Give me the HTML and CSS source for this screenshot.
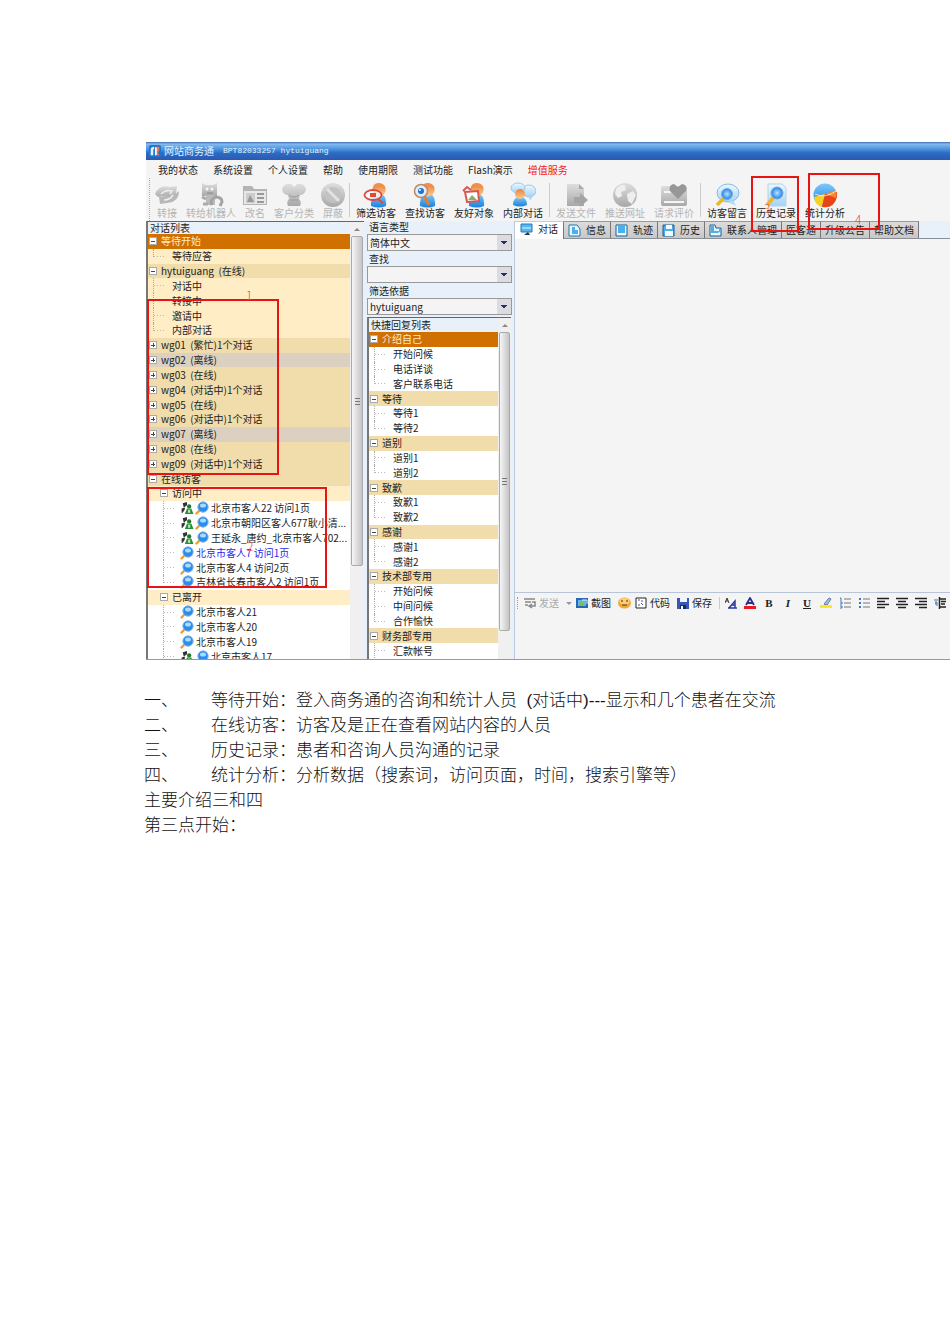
FILE: index.html
```
<!DOCTYPE html>
<html lang="zh-CN">
<head>
    <meta charset="UTF-8">
    <meta name="viewport" content="width=device-width, initial-scale=1.0">
    <title>网站商务通</title>
    <link rel="stylesheet" href="styles.css">
</head>
<body>
    <!-- shared icons -->
    <svg class="sprite" aria-hidden="true">
        <defs>
            <linearGradient id="g-gray" x1="0" y1="0" x2="0" y2="1"><stop offset="0" stop-color="#dedede"/><stop offset="1" stop-color="#a8a8a8"/></linearGradient>
            <linearGradient id="g-blue" x1="0" y1="0" x2="0" y2="1"><stop offset="0" stop-color="#7cc8fa"/><stop offset="1" stop-color="#1c80de"/></linearGradient>
            <linearGradient id="g-skin" x1="0" y1="0" x2="0" y2="1"><stop offset="0" stop-color="#e8863a"/><stop offset="1" stop-color="#fbc890"/></linearGradient>
            <linearGradient id="g-pale" x1="0" y1="0" x2="0" y2="1"><stop offset="0" stop-color="#eef8ff"/><stop offset="1" stop-color="#a4d2f4"/></linearGradient>
            <radialGradient id="g-lens"><stop offset="0" stop-color="#b4e4ff"/><stop offset="1" stop-color="#2080e4"/></radialGradient>
        </defs>
        <symbol id="visitor" viewBox="0 0 14 14">
            <path d="M1.500 12.500L5 9" stroke="#e8a030" stroke-width="2.400" stroke-linecap="round"/>
            <circle cx="8" cy="6" r="5.200" fill="#2c8cec" stroke="#88b8e4"/>
            <ellipse cx="8" cy="4.500" rx="3" ry="2" fill="#a8dcff"/>
        </symbol>
        <symbol id="talking" viewBox="0 0 12 13">
            <path d="M2 2l4-1v3L3 6zM1 7l3-1v2l-2 3H1z" fill="#333"/>
            <circle cx="8" cy="5" r="2" fill="#1c7a2c"/>
            <path d="M4 12l2-5h4l2 5z" fill="#249038"/>
            <path d="M7 8h2v3H7z" fill="#bfe8b8"/>
        </symbol>
        <symbol id="person" viewBox="0 0 26 26">
            <path d="M8 24q-1-12 8-12 8 0 7 12-7 3-15 0z" fill="url(#g-blue)"/>
            <circle cx="16" cy="8" r="6.500" fill="url(#g-skin)"/>
            <path d="M9.500 7q1-7 7-6 6 1 6 6-6-4-13 0z" fill="#f09048"/>
        </symbol>
        <symbol id="lines" viewBox="0 0 12 12">
            <path d="M0 1.500h12M0 4.500h8M0 7.500h12M0 10.500h8" stroke="#222" stroke-width="1.500"/>
        </symbol>
    </svg>

    <main class="page">
        <section class="app">
            <header class="titlebar">
                <svg class="logo" viewBox="0 0 14 14"><rect width="14" height="14" rx="2" fill="#2474c8"/><path d="M2 12V5q0-3 4-3v3H5v7z" fill="#d8f0ff"/><path d="M7 12V2h5v5l-2 1 2 4H9V9z" fill="#f47850"/><path d="M7 3h2v9H7z" fill="#fff"/></svg>
                <span>网站商务通</span>
                <span class="account">BPT82033257 hytuiguang</span>
            </header>

            <nav class="menu">
                <a href="#">我的状态</a>
                <a href="#">系统设置</a>
                <a href="#">个人设置</a>
                <a href="#">帮助</a>
                <a href="#">使用期限</a>
                <a href="#">测试功能</a>
                <a href="#">Flash演示</a>
                <a href="#" class="hot">增值服务</a>
            </nav>

            <div class="toolbar">
                <button type="button" disabled><svg viewBox="0 0 26 26"><path d="M1 12Q5 2 16 5l7-1-1 8-4 4-9-2-5 1z" fill="url(#g-gray)"/><path d="M25 9q0 11-12 12l-7 1-1-7 6-1q8 1 14-5z" fill="#b8b8b8"/><path d="M7 12q5-5 11-3l-2 3M10 18q6 0 9-5" stroke="#eee" stroke-width="1.500" fill="none"/></svg>转接</button>
                <button type="button" disabled><svg viewBox="0 0 26 26"><path d="M4 1l4 2h7l4-2v13H4z" fill="url(#g-gray)"/><path d="M8 13h9v10H8z" fill="#bbb"/><circle cx="9" cy="7" r="1.500" fill="#f5f5f5"/><circle cx="14" cy="7" r="1.500" fill="#f5f5f5"/><path d="M9 11h6" stroke="#888"/><path d="M14 23q-3-5 4-8 6 0 6 5l-2 4" fill="none" stroke="#a4a4a4" stroke-width="3"/><path d="M4 15l4 2M5 22h5" stroke="#aaa" stroke-width="3"/></svg>转给机器人</button>
                <button type="button" disabled><svg viewBox="0 0 26 26"><path d="M1 4h9l2 3h13v16H1z" fill="#b4b4b4"/><path d="M2 9h22v13H2z" fill="#e8e8e8"/><path d="M4 11h9v10H4z" fill="#ccc"/><path d="M5 20l3-7 4 7z" fill="#999"/><path d="M15 12h7M15 16h7M15 20h7" stroke="#999" stroke-width="2"/></svg>改名</button>
                <button type="button" disabled><svg viewBox="0 0 26 26"><path d="M1 7q2-6 9-5l3 3 3-3q7-1 9 5-1 6-6 6l-1 4q3 3 1 7H7q-2-4 1-7l-1-4Q2 13 1 7z" fill="url(#g-gray)"/><path d="M8 13q5 4 10 0M9 18h8" stroke="#999" fill="none"/></svg>客户分类</button>
                <button type="button" disabled><svg viewBox="0 0 26 26"><circle cx="13" cy="13" r="12" fill="url(#g-gray)"/><circle cx="13" cy="13" r="8" fill="#c2c2c2"/><path d="M7 7l12 12" stroke="#e2e2e2" stroke-width="3"/></svg>屏蔽</button>
                <span class="sep"></span>
                <button type="button"><svg viewBox="0 0 26 26"><use href="#person"/><ellipse cx="10" cy="13" rx="8.500" ry="5" fill="#fff" fill-opacity=".7" stroke="#e0483c" stroke-width="1.800"/><path d="M7 11h6v4H7z" fill="#e0483c"/><path d="M15 17l5 4" stroke="#e0483c" stroke-width="2"/></svg>筛选访客</button>
                <button type="button"><svg viewBox="0 0 26 26"><use href="#person"/><path d="M12 14l5 9" stroke="#e08030" stroke-width="3"/><circle cx="9" cy="9" r="6.500" fill="#d8f0ff" stroke="#c88460" stroke-width="1.500"/><circle cx="9" cy="9" r="3" fill="#2470d0"/><circle cx="8" cy="8" r="1" fill="#fff"/></svg>查找访客</button>
                <button type="button"><svg viewBox="0 0 26 26"><use href="#person"/><path d="M4 10l13-1 1 10-12 1z" fill="#fff" stroke="#d85850" stroke-width="2"/><path d="M7 18l4-5 5 5z" fill="#78b868"/><path d="M2 9l4-4 4 3" fill="none" stroke="#d85850" stroke-width="2"/></svg>友好对象</button>
                <button type="button"><svg viewBox="0 0 26 26"><ellipse cx="19" cy="9" rx="7" ry="6" fill="url(#g-pale)" stroke="#98c8ec"/><path d="M19 14l1 5 3-6z" fill="#a4d2f4"/><ellipse cx="8" cy="6" rx="7" ry="5" fill="url(#g-pale)" stroke="#98c8ec"/><path d="M3 23q0-8 7-8t7 8q-7 3-14 0z" fill="url(#g-blue)"/><circle cx="10" cy="12" r="5" fill="url(#g-skin)"/></svg>内部对话</button>
                <span class="sep"></span>
                <button type="button" disabled><svg viewBox="0 0 26 26"><path d="M4 2h12l5 5v17H4z" fill="url(#g-gray)"/><path d="M16 2v5h5z" fill="#aaa"/><path d="M11 15h6v-4l8 7-8 7v-4h-6z" fill="#a4a4a4"/></svg>发送文件</button>
                <button type="button" disabled><svg viewBox="0 0 26 26"><circle cx="13" cy="13" r="12" fill="url(#g-gray)"/><path d="M4 7q5-5 9-4l1 5-5 2 1 4-4 2-3-4zM15 12l6-3 3 4-4 9-4-3z" fill="#eee"/></svg>推送网址</button>
                <button type="button" disabled><svg viewBox="0 0 26 26"><rect x="0" y="4" width="26" height="20" rx="2" fill="url(#g-gray)"/><path d="M3 10h7M3 20h20" stroke="#f4f4f4" stroke-width="2"/><path d="M17 17l-8-8q-2-6 4-7l4 3 4-3q6 1 4 7z" fill="#979797"/></svg>请求评价</button>
                <span class="sep"></span>
                <button type="button"><svg viewBox="0 0 26 26"><ellipse cx="14" cy="11" rx="11" ry="9" fill="url(#g-pale)" stroke="#88bce8"/><path d="M19 18l3 6-8-4z" fill="#b4daf6"/><path d="M3 23l7-7" stroke="#f0b820" stroke-width="3.500"/><circle cx="13" cy="12" r="5.500" fill="url(#g-lens)" stroke="#78b0e4"/></svg>访客留言</button>
                <button type="button"><svg viewBox="0 0 26 26"><path d="M5 2h14l4 4v18H5z" fill="url(#g-pale)" stroke="#b0d4f0"/><path d="M4 23l7-8" stroke="#f0b820" stroke-width="3.500"/><circle cx="14" cy="11" r="6" fill="url(#g-lens)" stroke="#78a8d8"/></svg>历史记录</button>
                <button type="button"><svg viewBox="0 0 26 26"><circle cx="13" cy="13" r="11.500" fill="url(#g-blue)"/><path d="M13 12L2 15q1 8 8 10z" fill="#f8d020"/><path d="M13 12l-3 13q12 2 15-10v-5z" fill="#e84418"/><path d="M13 12l11-4q1 4 0 8z" fill="#f88828"/><path d="M3 12q10 5 21-3" stroke="#fff" fill="none" opacity=".7"/></svg>统计分析</button>
            </div>

            <div class="workspace">
                <!-- dialog list -->
                <aside class="dialogs pane">
                    <div class="list">
                        <h2>对话列表</h2>
                        <ul class="tree tree-dialogs">
                            <li class="selected"><button type="button" class="toggle minus" aria-label="收起"></button>等待开始</li>
                            <li class="leaf last soft">等待应答</li>
                            <li class="group"><button type="button" class="toggle minus" aria-label="收起"></button>hytuiguang&nbsp; (在线)</li>
                            <li class="leaf soft">对话中</li>
                            <li class="leaf soft">转接中</li>
                            <li class="leaf soft">邀请中</li>
                            <li class="leaf last soft">内部对话</li>
                            <li class="group"><button type="button" class="toggle plus" aria-label="展开"></button>wg01&nbsp; (繁忙)1个对话</li>
                            <li class="offline"><button type="button" class="toggle plus" aria-label="展开"></button>wg02&nbsp; (离线)</li>
                            <li class="group"><button type="button" class="toggle plus" aria-label="展开"></button>wg03&nbsp; (在线)</li>
                            <li class="group"><button type="button" class="toggle plus" aria-label="展开"></button>wg04&nbsp; (对话中)1个对话</li>
                            <li class="group"><button type="button" class="toggle plus" aria-label="展开"></button>wg05&nbsp; (在线)</li>
                            <li class="group"><button type="button" class="toggle plus" aria-label="展开"></button>wg06&nbsp; (对话中)1个对话</li>
                            <li class="offline"><button type="button" class="toggle plus" aria-label="展开"></button>wg07&nbsp; (离线)</li>
                            <li class="group"><button type="button" class="toggle plus" aria-label="展开"></button>wg08&nbsp; (在线)</li>
                            <li class="group"><button type="button" class="toggle plus" aria-label="展开"></button>wg09&nbsp; (对话中)1个对话</li>
                            <li class="group"><button type="button" class="toggle minus" aria-label="收起"></button>在线访客</li>
                            <li class="sub soft"><button type="button" class="toggle minus" aria-label="收起"></button>访问中</li>
                            <li class="leaf deep"><svg><use href="#talking"/></svg><svg><use href="#visitor"/></svg>北京市客人22 访问1页</li>
                            <li class="leaf deep"><svg><use href="#talking"/></svg><svg><use href="#visitor"/></svg>北京市朝阳区客人677耿小清...</li>
                            <li class="leaf deep"><svg><use href="#talking"/></svg><svg><use href="#visitor"/></svg>王延永_唐约_北京市客人702...</li>
                            <li class="leaf deep current"><svg><use href="#visitor"/></svg>北京市客人7 访问1页</li>
                            <li class="leaf deep"><svg><use href="#visitor"/></svg>北京市客人4 访问2页</li>
                            <li class="leaf deep last"><svg><use href="#visitor"/></svg>吉林省长春市客人2 访问1页</li>
                            <li class="sub soft"><button type="button" class="toggle minus" aria-label="收起"></button>已离开</li>
                            <li class="leaf deep"><svg><use href="#visitor"/></svg>北京市客人21</li>
                            <li class="leaf deep"><svg><use href="#visitor"/></svg>北京市客人20</li>
                            <li class="leaf deep"><svg><use href="#visitor"/></svg>北京市客人19</li>
                            <li class="leaf deep"><svg><use href="#talking"/></svg><svg><use href="#visitor"/></svg>北京市客人17</li>
                        </ul>
                    </div>
                    <div class="scrollbar"><span class="up"></span><span class="thumb thumb-dialogs"></span></div>
                </aside>

                <!-- filters and quick replies -->
                <aside class="side">
                    <label for="lang">语言类型</label>
                    <div class="combo"><select id="lang"><option>简体中文</option></select></div>
                    <label for="find">查找</label>
                    <div class="combo"><select id="find"><option></option></select></div>
                    <label for="filter">筛选依据</label>
                    <div class="combo"><select id="filter"><option>hytuiguang</option></select></div>
                    <div class="replies pane">
                        <div class="list">
                            <h2>快捷回复列表</h2>
                            <ul class="tree tree-replies">
                                <li class="selected"><button type="button" class="toggle minus" aria-label="收起"></button>介绍自己</li>
                                <li class="leaf">开始问候</li>
                                <li class="leaf">电话详谈</li>
                                <li class="leaf last">客户联系电话</li>
                                <li class="group"><button type="button" class="toggle minus" aria-label="收起"></button>等待</li>
                                <li class="leaf">等待1</li>
                                <li class="leaf last">等待2</li>
                                <li class="group"><button type="button" class="toggle minus" aria-label="收起"></button>道别</li>
                                <li class="leaf">道别1</li>
                                <li class="leaf last">道别2</li>
                                <li class="group"><button type="button" class="toggle minus" aria-label="收起"></button>致歉</li>
                                <li class="leaf">致歉1</li>
                                <li class="leaf last">致歉2</li>
                                <li class="group"><button type="button" class="toggle minus" aria-label="收起"></button>感谢</li>
                                <li class="leaf">感谢1</li>
                                <li class="leaf last">感谢2</li>
                                <li class="group"><button type="button" class="toggle minus" aria-label="收起"></button>技术部专用</li>
                                <li class="leaf">开始问候</li>
                                <li class="leaf">中间问候</li>
                                <li class="leaf last">合作愉快</li>
                                <li class="group"><button type="button" class="toggle minus" aria-label="收起"></button>财务部专用</li>
                                <li class="leaf">汇款帐号</li>
                            </ul>
                        </div>
                        <div class="scrollbar"><span class="up"></span><span class="thumb thumb-replies"></span></div>
                    </div>
                </aside>

                <!-- conversation -->
                <section class="chat">
                    <div class="tabs">
                        <button type="button" class="active"><svg viewBox="0 0 13 13"><path d="M1 1h11v8H1z" fill="#52b8f0" stroke="#2878b8"/><path d="M2 5h9M5 11h5" stroke="#e4f6ff"/><path d="M4 12h6l-2-3z" fill="#333"/></svg>对话</button>
                        <button type="button"><svg viewBox="0 0 13 13"><path d="M1 1h8l3 4v7H1z" fill="#e8f6ff" stroke="#1878b8"/><path d="M4 3v7h6V6H7V3z" fill="#48b0ec"/></svg>信息</button>
                        <button type="button"><svg viewBox="0 0 13 13"><path d="M1 1h11v11H1z" fill="#e8f6ff" stroke="#1c5c90"/><path d="M3 1h7v8H3z" fill="#48b0ec"/></svg>轨迹</button>
                        <button type="button"><svg viewBox="0 0 13 13"><path d="M1 1h11v11H1z" fill="#48b0ec" stroke="#1c5c90"/><path d="M4 1h6v4H4zM3 7h8v5H3z" fill="#f0faff"/></svg>历史</button>
                        <button type="button"><svg viewBox="0 0 13 13"><path d="M1 1h5l1 3h5v8H1z" fill="#e8f6ff" stroke="#1c5c90"/><path d="M2 2h3v5h5V5h2v2L9 9H2z" fill="#48b0ec"/></svg>联系人管理</button>
                        <button type="button">医客通</button>
                        <button type="button">升级公告</button>
                        <button type="button">帮助文档</button>
                    </div>
                    <div class="messages"></div>
                    <div class="format">
                        <span class="handle"></span>
                        <button type="button" class="send" disabled><svg viewBox="0 0 12 12"><path d="M0 2h11M1 5h6M1 8h3M8 5h3v4H6M8 7L5 9l3 2" stroke="#888" stroke-width="1.500" fill="none"/></svg>发送</button>
                        <span class="caret"></span>
                        <button type="button" class="shot"><svg viewBox="0 0 12 12"><path d="M0 1h12v10H0z" fill="#2868b0"/><path d="M2 3h8v6H2z" fill="#60b8e8"/><path d="M2 9l3-5 5 5z" fill="#78c050"/><path d="M6 3h5v4" stroke="#d8f0ff" fill="none"/></svg>截图</button>
                        <button type="button" class="smile" aria-label="表情"><svg viewBox="0 0 13 12"><ellipse cx="6.500" cy="6" rx="6.500" ry="5.500" fill="#f0a838"/><ellipse cx="6.500" cy="4.500" rx="5" ry="3.500" fill="#fcd070"/><path d="M4 3v2M9 3v2M4 8h5" stroke="#503010"/></svg></button>
                        <button type="button" class="code"><svg viewBox="0 0 12 12"><path d="M1 1h10v10H1z" fill="#fff" stroke="#222"/><path d="M3 3h2M6 4h2M6 6l2 2M3 8h2" stroke="#4858a0"/></svg>代码</button>
                        <button type="button" class="save"><svg viewBox="0 0 12 12"><path d="M0 1h12v11H0z" fill="#3858b8"/><path d="M3 1h7v4H3z" fill="#f0f4ff"/><path d="M3 8h6v4H3z" fill="#202858"/><path d="M4 9h2v3H4z" fill="#fff"/></svg>保存</button>
                        <span class="divider"></span>
                        <div class="marks">
                            <button type="button" aria-label="字体"><svg viewBox="0 0 12 12"><path d="M0 6l2-5 2 5M1 4h2" stroke="#333" fill="none"/><path d="M4 11l6-7v7M6 8h4M3 11h9" stroke="#2838a0" stroke-width="1.500" fill="none"/></svg></button>
                            <button type="button" aria-label="颜色"><svg viewBox="0 0 12 12"><path d="M2 8l4-7 4 7M3 6h6" stroke="#2c308c" stroke-width="1.800" fill="none"/><path d="M0 9h12v3H0z" fill="#e81c24"/></svg></button>
                            <button type="button" class="glyph bold">B</button>
                            <button type="button" class="glyph italic">I</button>
                            <button type="button" class="glyph underline">U</button>
                            <button type="button" aria-label="突出显示"><svg viewBox="0 0 12 12"><path d="M4 7l5-6 2 1-4 6z" fill="#a8c0e0" stroke="#6078a0"/><path d="M0 8h12v3H0z" fill="#f8e828"/></svg></button>
                            <button type="button" aria-label="编号"><svg viewBox="0 0 12 12"><path d="M5 2h7M5 6h7M5 10h7" stroke="#777"/><path d="M1 1h1v3M1 5h2v2H1M1 9h2v2H1" stroke="#3878c0" fill="none"/></svg></button>
                            <button type="button" aria-label="项目符号"><svg viewBox="0 0 12 12"><path d="M5 2h7M5 6h7M5 10h7" stroke="#777"/><path d="M1 2h2M1 6h2M1 10h2" stroke="#3878c0" stroke-width="2"/></svg></button>
                            <button type="button" aria-label="左对齐"><svg><use href="#lines"/></svg></button>
                            <button type="button" aria-label="居中"><svg viewBox="0 0 12 12"><path d="M0 1.500h12M2 4.500h8M0 7.500h12M2 10.500h8" stroke="#222" stroke-width="1.500"/></svg></button>
                            <button type="button" aria-label="右对齐"><svg viewBox="0 0 12 12"><path d="M0 1.500h12M4 4.500h8M0 7.500h12M4 10.500h8" stroke="#222" stroke-width="1.500"/></svg></button>
                            <button type="button" aria-label="缩进"><svg viewBox="0 0 12 12"><path d="M6 2h6M7 4.500h5M7 7h4M6 10h6M5.500 0v12" stroke="#222" stroke-width="1.500"/><path d="M0 3h4M1 6l3 0M2 4v4h2" stroke="#3878c0" fill="none"/></svg></button>
                        </div>
                    </div>
                    <textarea class="compose" aria-label="输入消息"></textarea>
                </section>
            </div>

            <!-- numbered callouts over the window -->
            <span class="mark mark-1"><b>1</b></span>
            <span class="mark mark-2"><b>2</b></span>
            <span class="mark mark-3"><b>3</b></span>
            <span class="mark mark-4"><b>4</b></span>
        </section>

        <section class="notes">
            <dl>
                <dt>一、</dt><dd>等待开始：登入商务通的咨询和统计人员&nbsp; (对话中)---显示和几个患者在交流</dd>
                <dt>二、</dt><dd>在线访客：访客及是正在查看网站内容的人员</dd>
                <dt>三、</dt><dd>历史记录：患者和咨询人员沟通的记录</dd>
                <dt>四、</dt><dd>统计分析：分析数据（搜索词，访问页面，时间，搜索引擎等）</dd>
            </dl>
            <p>主要介绍三和四</p>
            <p>第三点开始：</p>
        </section>
    </main>
</body>
</html>
```
FILE: styles.css
```
* {
    margin: 0;
    padding: 0;
    box-sizing: border-box;
}

body {
    background: #fff;
    color: #222;
    font-family: "Noto Sans CJK SC", sans-serif;
    font-size: 10px;
    line-height: 14px;
}

button,
select,
textarea {
    font: inherit;
    color: inherit;
    background: none;
    border: none;
    border-radius: 0;
}

a {
    color: inherit;
    text-decoration: none;
}

.sprite {
    position: absolute;
    width: 0;
    height: 0;
}

.page {
    padding: 142px 0 0 144px;
}

/* window */
.app {
    position: relative;
    margin-left: 2px;
    background: #f4f4f4;
    overflow: hidden;
}

.titlebar {
    display: flex;
    align-items: center;
    height: 18px;
    padding: 0 3px;
    gap: 3px;
    background: linear-gradient(#3c68a8 0, #84bcf0 2px, #4c94e0 7px, #2c6cc4 11px, #2c58b0 18px);
    color: #e4f2ff;
}

.logo {
    width: 12px;
    height: 12px;
}

.account {
    margin-left: 6px;
    font-family: "Liberation Mono", monospace;
    font-size: 8px;
}

.menu {
    display: flex;
    gap: 15px;
    padding: 3px 12px 1px;
}

.menu .hot {
    color: #f02020;
}

.toolbar {
    display: flex;
    align-items: center;
    gap: 9px;
    height: 43px;
    margin-left: 3px;
    padding: 2px 0 2px 7px;
    border-left: 1px dotted #aaa;
    white-space: nowrap;
}

.toolbar button {
    display: flex;
    flex-direction: column;
    align-items: center;
    line-height: 10px;
}

.toolbar button:disabled {
    color: #b4b4b4;
}

.toolbar svg {
    width: 26px;
    height: 26px;
    margin: 0 -3px;
}

.sep {
    width: 1px;
    height: 34px;
    margin: 0 -3px;
    background: #ccc;
}

.workspace {
    display: grid;
    grid-template-columns: 218px 150px 1fr;
    height: 439px;
    background: #e8f1f9;
    border-bottom: 1px solid #999;
}

/* tree lists */
.pane {
    display: flex;
    min-height: 0;
    overflow: hidden;
    border-top: 1px solid #666;
    border-left: 2px solid #777;
    background: #fff;
}

.list {
    flex: 1;
    min-width: 0;
}

.list h2 {
    padding-left: 2px;
    background: #e8f1f9;
    font-size: 10px;
    font-weight: normal;
}

.dialogs h2 {
    line-height: 12px;
}

.tree {
    display: grid;
    grid-auto-rows: 1fr;
    list-style: none;
    white-space: nowrap;
}

.tree-dialogs {
    height: 430px;
}

.tree-replies {
    height: 326px;
}

.tree li {
    display: flex;
    align-items: center;
    min-height: 0;
    padding-left: 1px;
    line-height: 14px;
    overflow: hidden;
}

.tree .selected {
    background: #d07000;
    color: #ffeacb;
}

.tree .group {
    background: #f1dcab;
}

.tree .soft {
    background: #ffedc6;
}

.tree .offline {
    background: #dcd1c1;
}

.tree .current {
    color: #2828f0;
}

.tree .sub {
    padding-left: 12px;
}

.tree .leaf {
    padding-left: 5px;
}

.tree .deep {
    padding-left: 15px;
}

.leaf::before {
    content: "";
    flex: none;
    align-self: stretch;
    width: 11px;
    margin-right: 7px;
    border-left: 1px dotted #aaa;
    background: repeating-linear-gradient(90deg, #bbb 0 1px, transparent 1px 3px) center / 100% 1px no-repeat;
}

.leaf.last::before {
    align-self: flex-start;
    height: 8px;
    background-position: bottom;
}

.leaf.deep::before {
    margin-right: 5px;
}

.tree svg {
    flex: none;
    width: 14px;
    height: 14px;
    margin-right: 2px;
}

.tree svg + svg {
    margin-left: -1px;
}

.toggle {
    position: relative;
    flex: none;
    width: 8px;
    height: 8px;
    margin-right: 4px;
    border: 1px solid #aaa;
    background: #fff;
}

.toggle::before,
.plus::after {
    content: "";
    position: absolute;
    top: 3px;
    left: 1px;
    width: 4px;
    height: 1px;
    background: #444;
}

.plus::after {
    top: 1px;
    left: 3px;
    width: 1px;
    height: 4px;
}

/* scrollbars */
.scrollbar {
    width: 14px;
    background: #f0f0f0;
}

.up {
    display: flex;
    align-items: center;
    justify-content: center;
    height: 14px;
}

.up::before {
    content: "";
    width: 0;
    border: 3px solid transparent;
    border-top: none;
    border-bottom: 3px solid #888;
}

.thumb {
    display: flex;
    align-items: center;
    justify-content: center;
    margin: 0 1px;
    border: 1px solid #aaa;
    border-radius: 2px;
    background: linear-gradient(90deg, #f6f6f6, #ddd 50%, #c4c4c8);
}

.thumb::before {
    content: "";
    width: 5px;
    height: 7px;
    background: repeating-linear-gradient(#777 0 1px, transparent 1px 3px);
}

.thumb-dialogs {
    height: 330px;
}

.thumb-replies {
    height: 299px;
}

/* middle column */
.side {
    display: flex;
    flex-direction: column;
    min-height: 0;
    padding: 0 2px 0 3px;
}

.side label {
    height: 15px;
    margin-bottom: -2px;
    padding-left: 2px;
    line-height: 12px;
}

.combo {
    position: relative;
    flex: none;
    height: 17px;
    margin-bottom: 2px;
    border: 1px solid #999;
    background: #f4f4f4;
}

.combo select {
    display: block;
    width: 100%;
    height: 15px;
    padding-left: 2px;
    appearance: none;
}

.combo::after {
    content: "";
    position: absolute;
    top: 0;
    right: 0;
    width: 14px;
    height: 15px;
    background: linear-gradient(#223070, #223070) 4px 6px / 6px 1px no-repeat, linear-gradient(#223070, #223070) 5px 7px / 4px 1px no-repeat, linear-gradient(#223070, #223070) 6px 8px / 2px 1px no-repeat, #dcdce0;
    pointer-events: none;
}

.replies {
    flex: 1;
    margin-right: 1px;
}

.replies .scrollbar {
    width: 13px;
}

/* right column */
.chat {
    display: flex;
    flex-direction: column;
    min-width: 0;
    border-left: 1px solid #bcc8d8;
    background: #f4f4f4;
}

.tabs {
    display: flex;
    height: 18px;
    background: #e8f1f9;
    border-bottom: 1px solid #8a8f96;
    white-space: nowrap;
}

.tabs button {
    display: flex;
    align-items: center;
    gap: 5px;
    padding: 0 4px;
    border-top: 1px solid #999;
    border-right: 1px solid #777;
    background: linear-gradient(#dcdcdc, #c8c8c8);
}

.tabs .active {
    height: 18px;
    padding: 0 5px 3px;
    border-color: #ccc #777 #fff;
    background: #fff;
}

.tabs svg {
    width: 13px;
    height: 13px;
}

.messages {
    flex: 1;
    border-bottom: 1px solid #b8c4d8;
}

.format {
    display: flex;
    align-items: center;
    height: 20px;
    padding-left: 2px;
    white-space: nowrap;
    overflow: hidden;
}

.format button {
    display: flex;
    flex: none;
    align-items: center;
    gap: 3px;
}

.format svg {
    width: 12px;
    height: 12px;
}

.handle {
    height: 12px;
    margin-right: 6px;
    border-left: 1px dotted #999;
}

.send:disabled {
    color: #aaa;
}

.caret {
    margin: 0 4px 0 7px;
    border: 3px solid transparent;
    border-top-color: #999;
    border-bottom: none;
}

.smile {
    margin: 0 4px 0 7px;
}

.smile svg {
    width: 13px;
}

.save {
    margin-left: 7px;
}

.divider {
    height: 12px;
    margin: 0 5px 0 7px;
    border-left: 1px solid #ccc;
}

.marks {
    display: flex;
    gap: 7px;
}

.marks button {
    justify-content: center;
    width: 12px;
}

.marks .glyph {
    font-family: "Liberation Serif", serif;
    font-size: 11px;
    font-weight: bold;
}

.italic {
    font-style: italic;
}

.underline {
    text-decoration: underline;
}

.compose {
    display: block;
    width: 100%;
    height: 46px;
    resize: none;
}

/* callouts */
.mark {
    position: absolute;
    border: 2px solid #e81414;
    pointer-events: none;
}

.mark b {
    position: absolute;
    color: #f04040;
    font-size: 12px;
    font-weight: 300;
}

.mark-1 {
    top: 157px;
    left: 1px;
    width: 132px;
    height: 176px;
}

.mark-1 b {
    top: -13px;
    left: 97px;
}

.mark-2 {
    top: 345px;
    left: 1px;
    width: 180px;
    height: 101px;
}

.mark-2 b {
    top: 50px;
    left: 98px;
}

.mark-3 {
    top: 34px;
    left: 605px;
    width: 48px;
    height: 56px;
}

.mark-3 b {
    top: 23px;
    left: 11px;
}

.mark-4 {
    top: 31px;
    left: 662px;
    width: 72px;
    height: 57px;
}

.mark-4 b {
    top: 37px;
    left: 45px;
}

/* document text below the window */
.notes {
    margin-top: 28px;
    color: #111;
    font-family: "Liberation Sans", "Noto Sans CJK SC", sans-serif;
    font-size: 17px;
    font-weight: 300;
    line-height: 25px;
}

.notes dl {
    display: grid;
    grid-template-columns: 67px 1fr;
}
```
